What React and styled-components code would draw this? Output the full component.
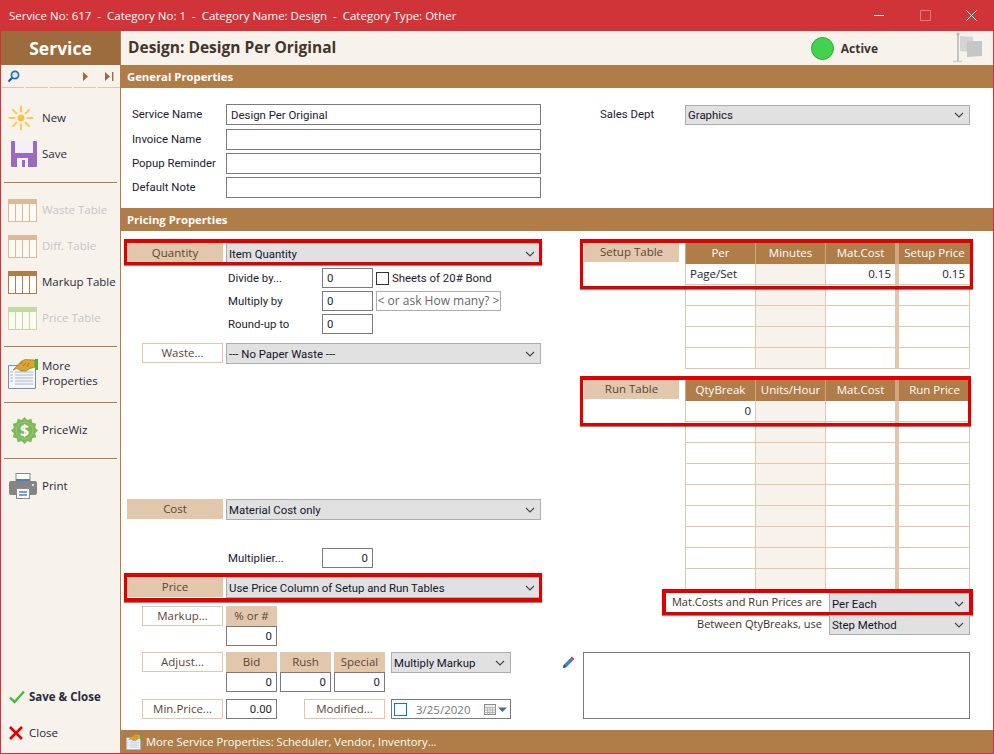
import React from 'react'
import styled, { createGlobalStyle, css } from 'styled-components'

const Global = createGlobalStyle`
  html, body { margin: 0; padding: 0; overflow: hidden; }
  body { font-family: "Open Sans", "Noto Sans", sans-serif; font-size: 11.5px; color: #1c1c2e; }
  * { box-sizing: border-box; }
`

const tan = '#e3c7ac'
const brown = '#b07c48'
const cream = '#f7f2ec'
const red = '#e00000'

// form fields run narrower than the buttons and table headers
const fieldFont = css`
  font-family: Roboto, "Liberation Sans", sans-serif;
  font-size: 11.4px;
`

const Window = styled.div`
  width: 994px;
  height: 754px;
  display: flex;
  flex-direction: column;
  border: 1px solid #d13438;
  border-top: 0;
  background: #fff;
`
const TitleBar = styled.div`
  height: 31px;
  flex: none;
  margin: 0 -1px;
  background: #d13438;
  color: #fff;
  display: flex;
  align-items: center;
  justify-content: space-between;
  padding-left: 9px;
`
const TitleText = styled.div`
  white-space: pre;
  font-size: 11.5px;
`
const WinButtons = styled.div`
  display: flex;
`
const WinButton = styled.div`
  width: 46px;
  height: 31px;
  display: flex;
  align-items: center;
  justify-content: center;
`
const Body = styled.div`
  flex: 1;
  display: flex;
  min-height: 0;
`
const Sidebar = styled.div`
  width: 120px;
  flex: none;
  background: ${cream};
  border-right: 1px solid ${brown};
  display: flex;
  flex-direction: column;
  padding-bottom: 2px;
`
const SideTitle = styled.div`
  height: 34px;
  background: #9c6c3f;
  color: #fff;
  font-size: 17.5px;
  font-weight: 700;
  display: flex;
  align-items: center;
  justify-content: center;
`
const NavRow = styled.div`
  height: 23px;
  margin-bottom: 12px;
  display: flex;
  gap: 2px;
  padding-left: 1px;
`
const NavCell = styled.div`
  width: 22px;
  height: 23px;
  border-bottom: 1px solid ${tan};
  display: flex;
  align-items: center;
  justify-content: center;
`
const SideItem = styled.div`
  height: 36px;
  display: flex;
  align-items: center;
  padding-left: 7px;
  color: ${p => (p.$off ? '#c6c6c6' : '#2a2a3a')};
  font-weight: ${p => (p.$bold ? 700 : 400)};
  line-height: 15px;
`
const IconSlot = styled.div`
  width: ${p => p.$w || 34}px;
  flex: none;
  display: flex;
  align-items: center;
`
const SideText = styled.span`
  margin-bottom: 2px;
`
const SideRule = styled.div`
  height: 1px;
  flex: none;
  margin: 10px 3px 9px 3px;
  background: ${brown};
`
const SideFoot = styled.div`
  margin-top: auto;
`
const Main = styled.div`
  flex: 1;
  min-width: 0;
  display: flex;
  flex-direction: column;
`
const HeadBar = styled.div`
  height: 34px;
  flex: none;
  background: ${cream};
  display: flex;
  align-items: center;
  padding: 0 10px 0 7px;
`
const HeadTitle = styled.div`
  flex: 1;
  font-size: 15.5px;
  font-weight: 700;
  color: #43352a;
  margin-bottom: 2px;
`
const Status = styled.div`
  display: flex;
  align-items: center;
  gap: 7px;
  font-weight: 700;
  font-size: 12px;
  color: #3c3430;
  margin-right: 75px;
`
const Lamp = styled.div`
  width: 23px;
  height: 23px;
  border-radius: 50%;
  background: #43d24f;
  border: 1px solid #2fa83a;
`
const SectionBar = styled.div`
  height: 23px;
  flex: none;
  background: ${brown};
  color: #fff;
  font-weight: 700;
  font-size: 11.3px;
  display: flex;
  align-items: center;
  padding-left: 6px;
`
const General = styled.div`
  height: 120px;
  flex: none;
  display: flex;
  padding: 16px 0 0 11px;
`
const NameList = styled.div`
  ${fieldFont}
  width: 409px;
  display: grid;
  grid-template-columns: 94px 315px;
  grid-template-rows: 25px 24px 24px 21px;
  align-items: start;
  line-height: 20px;
`
const SalesRow = styled.div`
  margin-left: 59px;
  display: flex;
  align-items: flex-start;
  padding-top: 1px;
`
const SalesLabel = styled.div`
  ${fieldFont}
  width: 85px;
  line-height: 18px;
`
const TextBox = styled.input`
  ${fieldFont}
  display: block;
  width: ${p => p.$w || 51}px;
  height: ${p => p.$h || 20}px;
  border: 1px solid #7a7a7a;
  background: #fff;
  padding: 0 4px;
  margin: 0;
  color: #1c1c2e;
  text-align: ${p => (p.$right ? 'right' : 'left')};
  outline: none;
  border-radius: 0;
`
const DropBox = styled.div`
  ${fieldFont}
  width: ${p => p.$w}px;
  height: ${p => p.$h || 21}px;
  flex: none;
  background: #e1e1e1;
  border: 1px solid #adadad;
  display: flex;
  align-items: center;
  justify-content: space-between;
  padding: 0 5px 0 2px;
  color: #14142a;
`
const Pricing = styled.div`
  flex: 1;
  min-height: 0;
  display: flex;
`
const LeftCol = styled.div`
  width: 440px;
  flex: none;
  padding: 12px 0 0 6px;
`
const Row = styled.div`
  position: relative;
  display: flex;
  align-items: flex-start;
  margin-top: ${p => p.$top || 0}px;
  width: 414px;
`
const FilledLabel = styled.div`
  width: 96px;
  height: 20px;
  flex: none;
  margin-right: 3px;
  padding-bottom: 2px;
  background: ${tan};
  color: #5a4632;
  display: flex;
  align-items: center;
  justify-content: center;
`
const PopLabel = styled.div`
  width: 81px;
  height: 20px;
  flex: none;
  margin: 0 3px 0 ${p => p.$left ?? 15}px;
  padding-bottom: 2px;
  background: #fff;
  border: 1px solid ${tan};
  color: #5a4632;
  display: flex;
  align-items: center;
  justify-content: center;
`
const PlainLabel = styled.div`
  ${fieldFont}
  width: 94px;
  height: 20px;
  flex: none;
  margin-left: 101px;
  line-height: 20px;
`
const CheckWrap = styled.div`
  ${fieldFont}
  display: flex;
  align-items: center;
  height: 20px;
  margin-left: 3px;
  gap: 3px;
`
const CheckBox = styled.span`
  width: 13px;
  height: 13px;
  background: #fff;
  border: 1px solid #333;
  display: block;
`
const AskBox = styled.div`
  width: 125px;
  height: 20px;
  margin-left: 3px;
  padding-bottom: 1px;
  font-size: 12px;
  border: 1px solid #adadad;
  color: #666;
  display: flex;
  align-items: center;
  justify-content: center;
`
const Stack = styled.div`
  width: 51px;
  flex: none;
  margin-right: ${p => p.$gap || 0}px;
`
const StackHead = styled.div`
  height: 20px;
  padding-bottom: 2px;
  background: ${tan};
  color: #5a4632;
  display: flex;
  align-items: center;
  justify-content: center;
`
const Spaced = styled.div`
  margin-left: ${p => p.$left}px;
`
const DateBox = styled.div`
  width: 120px;
  height: 20px;
  margin-left: 3px;
  border: 1px solid #7a7a7a;
  display: flex;
  align-items: center;
  padding-left: 2px;
  color: #77777f;
`
const DateTick = styled.span`
  width: 13px;
  height: 13px;
  border: 1px solid #0a78d7;
  margin-right: 9px;
  flex: none;
`
const DateValue = styled.span`
  flex: 1;
`
const Highlight = styled.div`
  position: absolute;
  inset: ${p => p.$inset};
  height: ${p => (p.$height ? `${p.$height}px` : 'auto')};
  border-style: solid;
  border-color: ${red};
  border-width: ${p => p.$bw || '4px 3px 3px 3px'};
  box-shadow: 0 1px 1px rgba(0, 0, 0, 0.45);
  pointer-events: none;
`
const RightCol = styled.div`
  flex: 1;
  min-width: 0;
  padding: 12px 23px 0 0;
`
const TableBlock = styled.div`
  position: relative;
  display: flex;
  align-items: flex-start;
  padding-left: 23px;
  margin-bottom: ${p => p.$after || 0}px;
`
const TableLabel = styled.div`
  width: 95px;
  height: 19px;
  flex: none;
  margin-right: 6px;
  background: ${tan};
  color: #5a4632;
  text-align: center;
  line-height: 17px;
`
const Grid = styled.div`
  width: 285px;
  display: grid;
  grid-template-columns: 70px 70px 70px 75px;
  grid-auto-rows: 21px;
`
const Head = styled.div`
  background: ${brown};
  color: #fff;
  border-left: 1px solid #cfa680;
  padding-bottom: 2px;
  display: flex;
  align-items: center;
  justify-content: center;
  white-space: nowrap;
  &:nth-child(4) { border-left: 4px solid #cfa680; }
`
const Cell = styled.div`
  border-left: 1px solid ${tan};
  border-bottom: 1px solid ${tan};
  padding: 0 4px;
  line-height: 19px;
  text-align: ${p => (p.$num ? 'right' : 'left')};
  &:nth-child(4n + 2) { background: ${cream}; }
  &:nth-child(4n) {
    border-left: 4px solid ${tan};
    border-right: 1px solid ${tan};
  }
`
const PriceRow = styled.div`
  position: relative;
  display: flex;
  justify-content: flex-end;
  align-items: flex-start;
  margin-top: ${p => p.$top}px;
  margin-left: 105px;
  height: ${p => p.$h}px;
`
const RowText = styled.div`
  margin-right: ${p => p.$gap}px;
  line-height: 18px;
  font-size: 11.05px;
  white-space: nowrap;
  color: #43302a;
`
const NoteRow = styled.div`
  display: flex;
  margin-top: 17px;
`
const PencilSlot = styled.div`
  width: 22px;
  padding: 4px 0 0 1px;
`
const NoteBox = styled.textarea`
  width: 387px;
  height: 67px;
  border: 1px solid #7a7a7a;
  resize: none;
  outline: none;
  margin: 0;
  display: block;
`
const FootBar = styled.div`
  height: 23px;
  flex: none;
  background: ${brown};
  color: #fff;
  font-size: 11.2px;
  display: flex;
  align-items: center;
  gap: 4px;
  padding-left: 5px;
`

const Chevron = () => (
  <svg width="10" height="6" viewBox="0 0 10 6">
    <path d="M1 1l4 4 4-4" fill="none" stroke="#444" strokeWidth="1.1" />
  </svg>
)

const Drop = ({ w, h, children }) => (
  <DropBox $w={w} $h={h}>
    <span>{children}</span>
    <Chevron />
  </DropBox>
)

const SunIcon = () => {
  const rays = [0, 45, 90, 135, 180, 225, 270, 315]
  return (
    <svg width="26" height="26" viewBox="0 0 26 26">
      <circle cx="13" cy="13" r="3.6" fill="#fbc347" />
      {rays.map(a => (
        <line key={a} x1="13" y1="6.5" x2="13" y2="1.5" stroke="#fcc850" strokeWidth="2" strokeLinecap="round" transform={`rotate(${a} 13 13)`} />
      ))}
    </svg>
  )
}

const SaveIcon = () => (
  <svg width="26" height="26" viewBox="0 0 26 26" style={{ marginLeft: 3 }}>
    <path d="M1 0h24a1 1 0 0 1 1 1v24a1 1 0 0 1-1 1H1a1 1 0 0 1-1-1V1a1 1 0 0 1 1-1z" fill="#9a6abf" />
    <rect x="4" y="0" width="18" height="12" fill="#f4f0f8" />
    <rect x="6" y="17" width="11" height="9" fill="#f6f2fa" />
    <rect x="11" y="19" width="3" height="7" fill="#9a6abf" />
  </svg>
)

const TableIcon = ({ color, fill }) => (
  <svg width="29" height="23" viewBox="0 0 29 23">
    <rect x="0.5" y="0.5" width="28" height="22" fill={fill} stroke={color} />
    <rect x="0" y="0" width="29" height="5" fill={color} />
    <path d="M7.5 5v18M14.5 5v18M21.5 5v18" stroke={color} />
  </svg>
)

const DocHandIcon = ({ size = 30 }) => (
  <svg width={size} height={size} viewBox="0 0 30 30">
    <path d="M0.5 6.5h27v23h-27z" fill="#f4f7fb" stroke="#7d8ea6" />
    <path d="M7 13h18M7 16h18M7 19h18M7 22h18M7 25h18M2 13h3M2 16h3M2 19h3M2 22h3" stroke="#a9b7cc" />
    <path d="M5 11L13 2.5 17 0.5 27 1 27 8 22 9.5 18 12 13 12 9 9.5z" fill="#d9a531" stroke="#8f6a1a" strokeWidth="0.6" />
    <path d="M12 5l3-2M15 7l3-3M19 8l2-4" stroke="#8f6a1a" strokeWidth="0.7" />
    <rect x="27" y="0" width="3" height="11" fill="#46b03a" />
  </svg>
)

const burst = (() => {
  const pts = []
  for (let i = 0; i < 24; i++) {
    const r = i % 2 ? 11 : 13.5
    const a = (i / 24) * Math.PI * 2
    pts.push(`${(13.5 + r * Math.sin(a)).toFixed(1)},${(13.5 - r * Math.cos(a)).toFixed(1)}`)
  }
  return pts.join(' ')
})()

const WizIcon = () => (
  <svg width="27" height="27" viewBox="0 0 27 27" style={{ marginLeft: 3 }}>
    <polygon points={burst} fill="#7fb85a" />
    <circle cx="13.5" cy="13.5" r="8.5" fill="none" stroke="#a4d084" strokeWidth="0.6" />
    <text x="13.5" y="19" textAnchor="middle" fontSize="16" fontWeight="700" fill="#fff" fontFamily="Open Sans, sans-serif">$</text>
  </svg>
)

const PrintIcon = () => (
  <svg width="28" height="26" viewBox="0 0 28 26" style={{ marginLeft: 1 }}>
    <rect x="7" y="0.5" width="14" height="9" fill="#fff" stroke="#8a8a8a" />
    <rect x="7" y="6" width="14" height="4" fill="#4f81b8" />
    <path d="M2 8h24a2 2 0 0 1 2 2v10a2 2 0 0 1-2 2H2a2 2 0 0 1-2-2V10a2 2 0 0 1 2-2z" fill="#858585" />
    <rect x="7.5" y="15.5" width="13" height="10" fill="#fff" stroke="#8a8a8a" />
    <path d="M10 19h8M10 22h8" stroke="#4f81b8" strokeWidth="1.4" />
    <circle cx="24" cy="12" r="1" fill="#fff" />
  </svg>
)

const CheckIcon = () => (
  <svg width="16" height="14" viewBox="0 0 16 14" style={{ marginLeft: 1 }}>
    <path d="M1 7.5l4.5 4.5L15 1.5" fill="none" stroke="#3cc13c" strokeWidth="2.4" />
  </svg>
)

const CrossIcon = () => (
  <svg width="14" height="14" viewBox="0 0 14 14" style={{ marginLeft: 1 }}>
    <path d="M1 1l12 12M13 1L1 13" stroke="#e00000" strokeWidth="2.6" />
  </svg>
)

const FlagIcon = () => (
  <svg width="30" height="32" viewBox="0 0 30 32">
    <path d="M5 2v27" stroke="#c4c4c4" strokeWidth="2" />
    <circle cx="5" cy="2" r="1.6" fill="#b8b8b8" />
    <path d="M0 29.5h9" stroke="#d0d0d0" strokeWidth="1.6" />
    <path d="M7 4l13 1v15L7 19z" fill="#d4d4d4" />
    <path d="M14 9h15v15l-15 1z" fill="#c6c6c6" />
  </svg>
)

const SearchGlyph = () => (
  <svg width="13" height="13" viewBox="0 0 13 13">
    <circle cx="8" cy="5" r="3.6" fill="#dcecfb" stroke="#1f6fc0" strokeWidth="1.7" />
    <path d="M5.3 7.8L1.5 11.5" stroke="#1f5fa8" strokeWidth="2.2" />
  </svg>
)

const PencilIcon = () => (
  <svg width="13" height="13" viewBox="0 0 13 13">
    <path d="M1 12l1-3.5 6.5-6.5 2.5 2.5L4.5 11z" fill="#3f7fc8" />
    <path d="M8.5 2l1.4-1.4 2.5 2.5L11 4.5z" fill="#e0342c" />
    <path d="M1 12l1-3.5 2.5 2.5z" fill="#4a4038" />
  </svg>
)

const CalendarIcon = () => (
  <svg width="26" height="13" viewBox="0 0 26 13">
    <rect x="0.5" y="1.5" width="11" height="10" fill="#eee" stroke="#8a8a8a" />
    <path d="M0 4.5h12M3.5 4.5v7M6 4.5v7M8.5 4.5v7M0 7h12M0 9.5h12" stroke="#a8a8a8" strokeWidth="0.7" />
    <path d="M14 4.5h9l-4.5 4.5z" fill="#4f6c90" />
  </svg>
)

const blank = ['', '', '', '']
const setupRows = [['Page/Set', '', '0.15', '0.15'], blank, blank, blank, blank]
const runRows = [['0', '', '', ''], ...Array.from({ length: 8 }, () => blank)]

const DataGrid = ({ heads, rows, leftText }) => (
  <Grid>
    {heads.map(h => <Head key={h}>{h}</Head>)}
    {rows.map((r, i) =>
      r.map((v, j) => (
        <Cell key={`${i}-${j}`} $num={j > 0 || !leftText}>{v}</Cell>
      ))
    )}
  </Grid>
)

export default function App() {
  return (
    <Window>
      <Global />
      <TitleBar>
        <TitleText>{'Service No: 617  -  Category No: 1  -  Category Name: Design  -  Category Type: Other'}</TitleText>
        <WinButtons>
          <WinButton>
            <svg width="11" height="11" viewBox="0 0 11 11"><path d="M0 5.5h10" stroke="#fff" /></svg>
          </WinButton>
          <WinButton>
            <svg width="11" height="11" viewBox="0 0 11 11"><rect x="0.5" y="0.5" width="10" height="10" fill="none" stroke="#e2787b" /></svg>
          </WinButton>
          <WinButton>
            <svg width="11" height="11" viewBox="0 0 11 11"><path d="M0.5 0.5l10 10M10.5 0.5l-10 10" stroke="#fff" /></svg>
          </WinButton>
        </WinButtons>
      </TitleBar>
      <Body>
        <Sidebar>
          <SideTitle>Service</SideTitle>
          <NavRow>
            <NavCell><SearchGlyph /></NavCell>
            <NavCell />
            <NavCell />
            <NavCell>
              <svg width="7" height="9" viewBox="0 0 7 9"><path d="M1 0l5 4.5L1 9z" fill="#9c6c3f" /></svg>
            </NavCell>
            <NavCell>
              <svg width="9" height="9" viewBox="0 0 9 9"><path d="M0 0l5 4.5L0 9zM7 0h1.4v9H7z" fill="#9c6c3f" /></svg>
            </NavCell>
          </NavRow>
          <SideItem><IconSlot><SunIcon /></IconSlot><SideText>New</SideText></SideItem>
          <SideItem><IconSlot><SaveIcon /></IconSlot><SideText>Save</SideText></SideItem>
          <SideRule />
          <SideItem $off><IconSlot><TableIcon color="#dcb99a" fill="#fdf9f5" /></IconSlot><SideText>Waste Table</SideText></SideItem>
          <SideItem $off><IconSlot><TableIcon color="#dcb99a" fill="#fdf9f5" /></IconSlot><SideText>Diff. Table</SideText></SideItem>
          <SideItem><IconSlot><TableIcon color={brown} fill="#fff" /></IconSlot><SideText>Markup Table</SideText></SideItem>
          <SideItem $off><IconSlot><TableIcon color="#c3d9a2" fill="#fdf9f5" /></IconSlot><SideText>Price Table</SideText></SideItem>
          <SideRule />
          <SideItem><IconSlot><DocHandIcon /></IconSlot><SideText>More<br />Properties</SideText></SideItem>
          <SideRule />
          <SideItem><IconSlot><WizIcon /></IconSlot><SideText>PriceWiz</SideText></SideItem>
          <SideRule />
          <SideItem><IconSlot><PrintIcon /></IconSlot><SideText>Print</SideText></SideItem>
          <SideFoot>
            <SideItem $bold><IconSlot $w={21}><CheckIcon /></IconSlot><SideText>Save &amp; Close</SideText></SideItem>
            <SideItem><IconSlot $w={21}><CrossIcon /></IconSlot><SideText>Close</SideText></SideItem>
          </SideFoot>
        </Sidebar>
        <Main>
          <HeadBar>
            <HeadTitle>Design: Design Per Original</HeadTitle>
            <Status><Lamp />Active</Status>
            <FlagIcon />
          </HeadBar>
          <SectionBar>General Properties</SectionBar>
          <General>
            <NameList>
              <span>Service Name</span>
              <TextBox $w={315} $h={21} readOnly value="Design Per Original" />
              <span>Invoice Name</span>
              <TextBox $w={315} $h={21} readOnly value="" />
              <span>Popup Reminder</span>
              <TextBox $w={315} $h={21} readOnly value="" />
              <span>Default Note</span>
              <TextBox $w={315} $h={21} readOnly value="" />
            </NameList>
            <SalesRow>
              <SalesLabel>Sales Dept</SalesLabel>
              <Drop w={285} h={20}>Graphics</Drop>
            </SalesRow>
          </General>
          <SectionBar>Pricing Properties</SectionBar>
          <Pricing>
            <LeftCol>
              <Row>
                <FilledLabel>Quantity</FilledLabel>
                <Drop w={315}>Item Quantity</Drop>
                <Highlight $inset="-4px -1px -1px -3px" />
              </Row>
              <Row $top={4}>
                <PlainLabel>Divide by...</PlainLabel>
                <TextBox readOnly value="0" />
                <CheckWrap><CheckBox />Sheets of 20# Bond</CheckWrap>
              </Row>
              <Row $top={3}>
                <PlainLabel>Multiply by</PlainLabel>
                <TextBox readOnly value="0" />
                <AskBox>{'< or ask How many? >'}</AskBox>
              </Row>
              <Row $top={3}>
                <PlainLabel>Round-up to</PlainLabel>
                <TextBox readOnly value="0" />
              </Row>
              <Row $top={9}>
                <PopLabel>Waste...</PopLabel>
                <Drop w={315}>--- No Paper Waste ---</Drop>
              </Row>
              <Row $top={135}>
                <FilledLabel>Cost</FilledLabel>
                <Drop w={315}>Material Cost only</Drop>
              </Row>
              <Row $top={28}>
                <PlainLabel>Multiplier...</PlainLabel>
                <TextBox $right readOnly value="0" />
              </Row>
              <Row $top={9}>
                <FilledLabel>Price</FilledLabel>
                <Drop w={315}>Use Price Column of Setup and Run Tables</Drop>
                <Highlight $inset="-4px -1px -4px -3px" $bw="4px 3px 4px 3px" />
              </Row>
              <Row $top={8}>
                <PopLabel>Markup...</PopLabel>
                <Stack>
                  <StackHead>% or #</StackHead>
                  <TextBox $right readOnly value="0" />
                </Stack>
              </Row>
              <Row $top={6}>
                <PopLabel>Adjust...</PopLabel>
                <Stack $gap={3}>
                  <StackHead>Bid</StackHead>
                  <TextBox $right readOnly value="0" />
                </Stack>
                <Stack $gap={3}>
                  <StackHead>Rush</StackHead>
                  <TextBox $right readOnly value="0" />
                </Stack>
                <Stack>
                  <StackHead>Special</StackHead>
                  <TextBox $right readOnly value="0" />
                </Stack>
                <Spaced $left={6}><Drop w={120}>Multiply Markup</Drop></Spaced>
              </Row>
              <Row $top={7}>
                <PopLabel>Min.Price...</PopLabel>
                <TextBox $right readOnly value="0.00" />
                <PopLabel $left={27}>Modified...</PopLabel>
                <DateBox>
                  <DateTick />
                  <DateValue>3/25/2020</DateValue>
                  <CalendarIcon />
                </DateBox>
              </Row>
            </LeftCol>
            <RightCol>
              <TableBlock $after={11}>
                <TableLabel>Setup Table</TableLabel>
                <DataGrid heads={['Per', 'Minutes', 'Mat.Cost', 'Setup Price']} rows={setupRows} leftText />
                <Highlight $inset="-4px -3px auto 19px" $height={50} />
              </TableBlock>
              <TableBlock>
                <TableLabel>Run Table</TableLabel>
                <DataGrid heads={['QtyBreak', 'Units/Hour', 'Mat.Cost', 'Run Price']} rows={runRows} />
                <Highlight $inset="-4px -1px auto 19px" $height={50} />
              </TableBlock>
              <PriceRow $top={3} $h={21}>
                <RowText $gap={7}>Mat.Costs and Run Prices are</RowText>
                <Drop w={141}>Per Each</Drop>
                <Highlight $inset="-4px -3px -1px -4px" $bw="4px 4px 3px 4px" />
              </PriceRow>
              <PriceRow $top={1} $h={20}>
                <RowText $gap={7}>Between QtyBreaks, use</RowText>
                <Drop w={141} h={20}>Step Method</Drop>
              </PriceRow>
              <NoteRow>
                <PencilSlot><PencilIcon /></PencilSlot>
                <NoteBox readOnly />
              </NoteRow>
            </RightCol>
          </Pricing>
          <FootBar><DocHandIcon size={16} />More Service Properties: Scheduler, Vendor, Inventory...</FootBar>
        </Main>
      </Body>
    </Window>
  )
}
